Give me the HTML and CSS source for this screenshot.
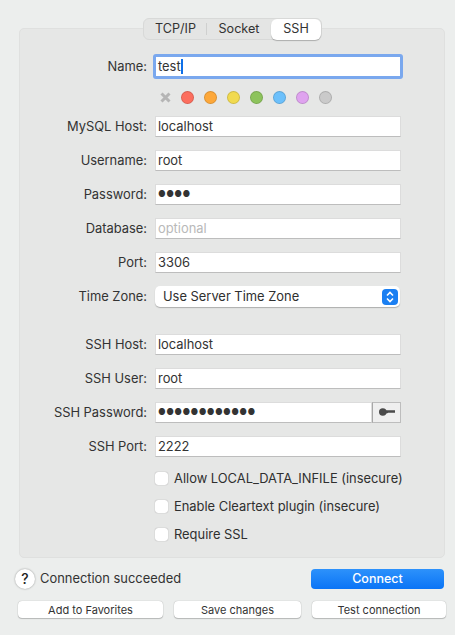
FILE: index.html
```html
<!DOCTYPE html>
<html lang="en">
<head>
<meta charset="utf-8">
<title>Connection</title>
<link rel="stylesheet" href="styles.css">
</head>
<body>
<main class="window">
  <section class="panel">
    <div class="tabs">
      <span class="tab">TCP/IP</span>
      <span class="tab-sep"></span>
      <span class="tab">Socket</span>
      <span class="tab tab-active">SSH</span>
    </div>
    <div class="form">
      <label class="label">Name:</label>
      <div class="focus"><div class="field field-focus">test<span class="caret"></span></div></div>

      <div class="colors">
        <svg class="clear" width="13" height="13" viewBox="0 0 13 13"><path d="M2.5 2.5l8 8M10.5 2.5l-8 8" stroke="#b5b5b5" stroke-width="3" fill="none"/></svg>
        <span class="dot dot-red"></span>
        <span class="dot dot-orange"></span>
        <span class="dot dot-yellow"></span>
        <span class="dot dot-green"></span>
        <span class="dot dot-blue"></span>
        <span class="dot dot-purple"></span>
        <span class="dot dot-gray"></span>
      </div>

      <label class="label">MySQL Host:</label>
      <div class="field">localhost</div>
      <label class="label">Username:</label>
      <div class="field">root</div>
      <label class="label">Password:</label>
      <div class="field field-dots">●●●●</div>
      <label class="label">Database:</label>
      <div class="field field-placeholder">optional</div>
      <label class="label">Port:</label>
      <div class="field">3306</div>
      <label class="label">Time Zone:</label>
      <div class="select">
        <span>Use Server Time Zone</span>
        <span class="stepper"><svg width="10" height="14" viewBox="0 0 10 14"><path d="M2 5.5L5 2.5L8 5.5M2 8.5L5 11.5L8 8.5" stroke="#fff" stroke-width="1.6" fill="none"/></svg></span>
      </div>

      <div class="spacer"></div>

      <label class="label">SSH Host:</label>
      <div class="field">localhost</div>
      <label class="label">SSH User:</label>
      <div class="field">root</div>
      <label class="label">SSH Password:</label>
      <div class="field-group">
        <div class="field field-dots field-grow">●●●●●●●●●●●●</div>
        <span class="key"><svg width="16" height="8" viewBox="0 0 16 8"><ellipse cx="3.8" cy="4" rx="3.8" ry="3.7" fill="#4a4a4a"/><path d="M6 2.2h10v2.2l-1 .7-1-.7-1 .7-1-.7-1 .7-1-.7-1 .7-2 .3z" fill="#4a4a4a"/></svg></span>
      </div>
      <label class="label">SSH Port:</label>
      <div class="field">2222</div>

      <div class="checks">
        <div class="check"><span class="box"></span>Allow LOCAL_DATA_INFILE (insecure)</div>
        <div class="check"><span class="box"></span>Enable Cleartext plugin (insecure)</div>
        <div class="check"><span class="box"></span>Require SSL</div>
      </div>
    </div>
  </section>

  <div class="status-row">
    <span class="help">?</span>
    <span class="status">Connection succeeded</span>
    <button class="connect">Connect</button>
  </div>
  <div class="actions">
    <button class="btn btn-fav">Add to Favorites</button>
    <button class="btn btn-save">Save changes</button>
    <button class="btn btn-test">Test connection</button>
  </div>
</main>
</body>
</html>
```
FILE: styles.css
```css
* { box-sizing: border-box; }
html, body { margin: 0; padding: 0; }
body {
  width: 455px;
  height: 635px;
  overflow: hidden;
  background: #eceeed;
  color: #2f2f2f;
  font-family: Inter, "Liberation Sans", sans-serif;
  font-size: 12.9px;
}
.window { padding: 28px 9px 0 19px; }
.panel {
  position: relative;
  width: 426px;
  height: 530px;
  background: #e6e7e6;
  border: 1px solid #dfe0df;
  border-radius: 5px;
  padding-top: 27px;
}
.tabs {
  position: absolute;
  top: -11px;
  left: 123px;
  width: 179px;
  height: 22px;
  display: flex;
  align-items: center;
  background: #e4e5e4;
  border: 1px solid #d8d9d8;
  border-radius: 6px;
  color: #333;
  font-size: 12.6px;
}
.tab { text-align: center; line-height: 20px; }
.tab:nth-child(1) { width: 62px; padding-left: 1px; }
.tab:nth-child(3) { width: 64px; }
.tab-sep { width: 1px; height: 12px; background: #cfd0cf; }
.tab-active {
  flex: 1;
  height: 21px;
  background: #fff;
  border-radius: 6px;
  box-shadow: 0 1px 1px rgba(0,0,0,.25);
}
.form {
  display: grid;
  grid-template-columns: 127px 246px;
  column-gap: 8px;
  row-gap: 13px;
  align-items: center;
}
.label { text-align: right; color: #333; line-height: 21px; }
.field {
  height: 21px;
  background: #fff;
  border: 1px solid #dcdcdc;
  border-bottom-color: #bdbdbd;
  padding-left: 2px;
  line-height: 19px;
  color: #333;
  white-space: nowrap;
}
.focus {
  height: 25px;
  margin: -2px 0 -2px -2px;
  width: 250px;
  padding: 3px;
  background: #7aa8ee;
  border-radius: 3px;
}
.field-focus { height: 19px; border: 0; padding-left: 2px; line-height: 19px; }
.caret {
  display: inline-block;
  width: 2px;
  height: 15px;
  background: #0f6fe8;
  vertical-align: -3px;
}
.field-dots { font-size: 8.5px; letter-spacing: .36px; color: #333; padding-left: 2px; }
.field-placeholder { color: #b9b9b9; }
.colors {
  grid-column: 2;
  display: flex;
  align-items: center;
  gap: 10px;
  height: 13px;
  margin: 1px 0 -1px;
  padding-left: 4px;
}
.clear { margin-right: -1px; }
.dot {
  width: 13px;
  height: 13px;
  border-radius: 50%;
  border: 1px solid rgba(0,0,0,.14);
}
.dot-red { background: #fc6e5e; }
.dot-orange { background: #fda83a; }
.dot-yellow { background: #f1da4f; }
.dot-green { background: #8dc35c; }
.dot-blue { background: #6cc0fb; }
.dot-purple { background: #dfa3ef; }
.dot-gray { background: #cacaca; }
.select {
  height: 21px;
  margin-right: 1px;
  background: #fff;
  border-radius: 5px;
  box-shadow: 0 1px 1px rgba(0,0,0,.25);
  display: flex;
  align-items: center;
  justify-content: space-between;
  padding: 0 2px 0 8px;
}
.stepper {
  width: 16px;
  height: 16px;
  background: #1a7ff2;
  border-radius: 4px;
  display: flex;
  align-items: center;
  justify-content: center;
}
.spacer { grid-column: 1 / -1; height: 1px; }
.field-group { display: flex; height: 21px; }
.field-grow { flex: 1; }
.key {
  flex: none;
  width: 29px;
  background: #efefef;
  border: 1px solid #bdbdbd;
  border-left-color: #a8a8a8;
  display: flex;
  align-items: center;
  justify-content: center;
  padding-bottom: 2px;
}
.checks {
  grid-column: 2;
  display: flex;
  flex-direction: column;
  gap: 9px;
  margin-top: -1px;
}
.check {
  display: flex;
  align-items: center;
  gap: 6px;
  height: 19px;
  white-space: nowrap;
}
.box {
  flex: none;
  width: 13px;
  height: 13px;
  background: #fff;
  border-radius: 3px;
  box-shadow: 0 0 1px rgba(0,0,0,.45);
}
.status-row {
  display: flex;
  align-items: center;
  height: 21px;
  margin: 10px 0 0 -4px;
}
.help {
  width: 20px;
  height: 20px;
  background: #fff;
  border-radius: 50%;
  box-shadow: 0 0 2px rgba(0,0,0,.4);
  text-align: center;
  line-height: 20px;
  font-size: 14px;
  font-weight: 500;
  color: #222;
}
.status { margin-left: 5px; width: 271px; color: #333; }
.connect {
  flex: none;
  width: 133px;
  height: 20px;
  border: 0;
  border-radius: 4px;
  background: linear-gradient(#2d92fb, #0a74f6);
  color: #fff;
  font: 500 12.5px Inter, "Liberation Sans", sans-serif;
  padding: 0;
}
.actions {
  display: flex;
  margin: 12px 0 0 -1px;
}
.btn {
  flex: none;
  height: 17px;
  border: 0;
  border-radius: 4px;
  background: #fff;
  box-shadow: 0 0 1px rgba(0,0,0,.35), 0 1px 1px rgba(0,0,0,.2);
  color: #333;
  font: 11px Inter, "Liberation Sans", sans-serif;
  padding: 0;
}
.btn-fav { width: 145px; }
.btn-save { width: 127px; margin-left: 11px; }
.btn-test { width: 134px; margin-left: 11px; }
```
